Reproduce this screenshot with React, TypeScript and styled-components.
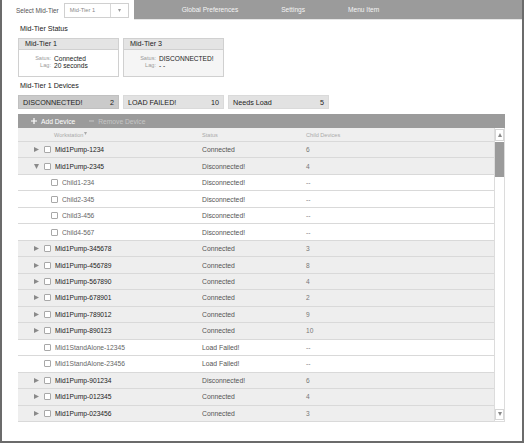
import React from "react";
import styled, { createGlobalStyle } from "styled-components";

type Kind = "parent" | "child" | "single";

interface Device {
  name: string;
  status: string;
  children: string;
  kind: Kind;
  open?: boolean;
}

const devices: Device[] = [
  { name: "Mid1Pump-1234", status: "Connected", children: "6", kind: "parent" },
  { name: "Mid1Pump-2345", status: "Disconnected!", children: "4", kind: "parent", open: true },
  { name: "Child1-234", status: "Disconnected!", children: "--", kind: "child" },
  { name: "Child2-345", status: "Disconnected!", children: "--", kind: "child" },
  { name: "Child3-456", status: "Disconnected!", children: "--", kind: "child" },
  { name: "Child4-567", status: "Disconnected!", children: "--", kind: "child" },
  { name: "Mid1Pump-345678", status: "Connected", children: "3", kind: "parent" },
  { name: "Mid1Pump-456789", status: "Connected", children: "8", kind: "parent" },
  { name: "Mid1Pump-567890", status: "Connected", children: "4", kind: "parent" },
  { name: "Mid1Pump-678901", status: "Connected", children: "2", kind: "parent" },
  { name: "Mid1Pump-789012", status: "Connected", children: "9", kind: "parent" },
  { name: "Mid1Pump-890123", status: "Connected", children: "10", kind: "parent" },
  { name: "Mid1StandAlone-12345", status: "Load Failed!", children: "--", kind: "single" },
  { name: "Mid1StandAlone-23456", status: "Load Failed!", children: "--", kind: "single" },
  { name: "Mid1Pump-901234", status: "Disconnected!", children: "6", kind: "parent" },
  { name: "Mid1Pump-012345", status: "Connected", children: "4", kind: "parent" },
  { name: "Mid1Pump-023456", status: "Connected", children: "3", kind: "parent" },
];

const GlobalStyle = createGlobalStyle`
  html, body {
    margin: 0;
    padding: 0;
    background: #fff;
  }
  body {
    font-family: "Liberation Sans", Arial, sans-serif;
    color: #222;
  }
`;

const Frame = styled.div`
  box-sizing: border-box;
  width: 524px;
  height: 443px;
  border: 2px solid #6b6b6b;
  border-top: 0;
  display: flex;
  flex-direction: column;
  overflow: hidden;
`;

const TopBar = styled.div`
  display: flex;
  height: 20px;
`;

const Picker = styled.div`
  display: flex;
  align-items: center;
  gap: 5px;
  padding: 0 5px 0 14px;
`;

const PickerLabel = styled.span`
  font-size: 6.4px;
  color: #555;
`;

const Select = styled.div`
  box-sizing: border-box;
  width: 65px;
  height: 15px;
  border: 1px solid #d0d0d0;
  display: flex;
  align-items: stretch;
`;

const SelectValue = styled.span`
  flex: 1;
  display: flex;
  align-items: center;
  padding-left: 5px;
  font-size: 5.7px;
  color: #888;
`;

const SelectArrow = styled.span`
  width: 17px;
  border-left: 1px solid #d8d8d8;
  display: flex;
  align-items: center;
  justify-content: center;
`;

const Nav = styled.nav`
  flex: 1;
  display: flex;
  align-items: center;
  gap: 43px;
  padding-left: 48px;
  background: #9b9b9b;
  border-bottom: 1px solid #e6e6e6;
  font-size: 6.6px;
  color: #f4f4f4;
`;

const Main = styled.main`
  display: flex;
  flex-direction: column;
  padding: 0 17px 0 16px;
`;

const Heading = styled.h2<{ $top: number }>`
  margin: ${({ $top }) => $top}px 0 0 2px;
  font-size: 7.1px;
  font-weight: normal;
  line-height: 10px;
  color: #222;
`;

const CardRow = styled.div`
  display: flex;
  gap: 4px;
  margin-top: 4px;
`;

const Card = styled.section<{ $muted?: boolean }>`
  box-sizing: border-box;
  width: 101px;
  height: 39px;
  border: 1px solid #d0d0d0;
  background: ${({ $muted }) => ($muted ? "#f5f5f5" : "#fff")};
`;

const CardHead = styled.div`
  height: 10px;
  line-height: 10px;
  padding-left: 6px;
  background: #e4e4e4;
  border-bottom: 1px solid #d0d0d0;
  font-size: 7.2px;
  color: #222;
`;

const CardBody = styled.dl`
  display: grid;
  grid-template-columns: 32px 1fr;
  column-gap: 3px;
  margin: 0;
  padding-top: 5px;
  line-height: 7px;
`;

const Term = styled.dt`
  text-align: right;
  font-size: 5.6px;
  color: #9a9a9a;
`;

const Value = styled.dd`
  margin: 0;
  font-size: 6.6px;
  color: #222;
`;

const ChipRow = styled.div`
  display: flex;
  gap: 4px;
  margin-top: 4px;
`;

const Chip = styled.div<{ $active?: boolean }>`
  box-sizing: border-box;
  width: 101px;
  height: 14px;
  padding: 0 4px;
  display: flex;
  align-items: center;
  justify-content: space-between;
  background: ${({ $active }) => ($active ? "#cacaca" : "#e2e2e2")};
  border: 1px solid ${({ $active }) => ($active ? "#c0c0c0" : "#dadada")};
  font-size: 7.2px;
  color: #222;
`;

const Toolbar = styled.div`
  display: flex;
  align-items: center;
  gap: 14px;
  height: 14px;
  margin-top: 5px;
  padding-left: 13px;
  background: #9b9b9b;
`;

const ToolButton = styled.span<{ $disabled?: boolean }>`
  display: flex;
  align-items: center;
  gap: 4px;
  font-size: 6.7px;
  color: ${({ $disabled }) => ($disabled ? "#c6c6c6" : "#fff")};
`;

const Table = styled.div`
  display: flex;
`;

const Grid = styled.div`
  flex: 1;
  display: flex;
  flex-direction: column;
`;

const HeadRow = styled.div`
  box-sizing: border-box;
  display: grid;
  grid-template-columns: 184px 104px 1fr;
  align-items: center;
  height: 14px;
  background: #efefef;
  border-bottom: 1px solid #d9d9d9;
  font-size: 5.6px;
  color: #aaa;
`;

const HeadCell = styled.span<{ $indent?: number }>`
  display: flex;
  align-items: flex-start;
  gap: 1px;
  padding-left: ${({ $indent }) => $indent ?? 0}px;
`;

const Row = styled.div<{ $kind: Kind }>`
  box-sizing: border-box;
  display: grid;
  grid-template-columns: 184px 104px 1fr;
  align-items: center;
  height: 16.47px;
  background: ${({ $kind }) => ($kind === "parent" ? "#eeeeee" : "#fff")};
  border-bottom: 1px solid #d9d9d9;
`;

const NameCell = styled.span<{ $kind: Kind }>`
  display: flex;
  align-items: center;
  padding-left: ${({ $kind }) => ($kind === "child" ? 33 : 16)}px;
  font-size: 6.7px;
  color: ${({ $kind }) => ($kind === "parent" ? "#222" : "#666")};
`;

const Toggle = styled.span`
  width: 10px;
  display: flex;
  align-items: center;
`;

const Check = styled.span`
  box-sizing: border-box;
  width: 7px;
  height: 7px;
  margin-right: 4px;
  border: 1px solid #a8a8a8;
  border-radius: 1px;
  background: #fff;
`;

const StatusCell = styled.span`
  font-size: 6.8px;
  color: #555;
`;

const CountCell = styled.span`
  font-size: 6.6px;
  color: #777;
`;

const Scroll = styled.div`
  box-sizing: border-box;
  width: 11px;
  display: flex;
  flex-direction: column;
  background: #fff;
  border-left: 1px solid #dcdcdc;
  border-right: 1px solid #dcdcdc;
  border-bottom: 1px solid #dcdcdc;
`;

const ScrollButton = styled.span<{ $h: number }>`
  box-sizing: border-box;
  height: ${({ $h }) => $h}px;
  display: flex;
  align-items: center;
  justify-content: center;
  border: 1px solid #d6d6d6;
  margin: 1px 0;
`;

const Thumb = styled.span`
  height: 35px;
  background: #9b9b9b;
`;

const Track = styled.span`
  flex: 1;
`;

const Tri = ({ dir, size = 5, color = "#8a8a8a" }: { dir: "right" | "down" | "up"; size?: number; color?: string }) => {
  const pts =
    dir === "right" ? "0,0 5,2.5 0,5" : dir === "down" ? "0,0 5,0 2.5,5" : "0,5 5,5 2.5,0";
  return (
    <svg width={size} height={size} viewBox="0 0 5 5">
      <polygon points={pts} fill={color} />
    </svg>
  );
};

const Plus = () => (
  <svg width="6" height="6" viewBox="0 0 6 6">
    <path d="M3 0v6M0 3h6" stroke="#fff" strokeWidth="1.2" />
  </svg>
);

const Minus = () => (
  <svg width="5" height="6" viewBox="0 0 5 6">
    <path d="M0 3h5" stroke="#c6c6c6" strokeWidth="1" />
  </svg>
);

export default function App() {
  return (
    <>
      <GlobalStyle />
      <Frame>
        <TopBar>
          <Picker>
            <PickerLabel>Select Mid-Tier</PickerLabel>
            <Select>
              <SelectValue>Mid-Tier 1</SelectValue>
              <SelectArrow>
                <Tri dir="down" size={3} color="#999" />
              </SelectArrow>
            </Select>
          </Picker>
          <Nav>
            <span>Global Preferences</span>
            <span>Settings</span>
            <span>Menu Item</span>
          </Nav>
        </TopBar>

        <Main>
          <Heading $top={4}>Mid-Tier Status</Heading>
          <CardRow>
            <Card>
              <CardHead>Mid-Tier 1</CardHead>
              <CardBody>
                <Term>Satus:</Term>
                <Value>Connected</Value>
                <Term>Lag:</Term>
                <Value>20 seconds</Value>
              </CardBody>
            </Card>
            <Card $muted>
              <CardHead>Mid-Tier 3</CardHead>
              <CardBody>
                <Term>Satus:</Term>
                <Value>DISCONNECTED!</Value>
                <Term>Lag:</Term>
                <Value>- -</Value>
              </CardBody>
            </Card>
          </CardRow>

          <Heading $top={4}>Mid-Tier 1 Devices</Heading>
          <ChipRow>
            <Chip $active>
              <span>DISCONNECTED!</span>
              <span>2</span>
            </Chip>
            <Chip>
              <span>LOAD FAILED!</span>
              <span>10</span>
            </Chip>
            <Chip>
              <span>Needs Load</span>
              <span>5</span>
            </Chip>
          </ChipRow>

          <Toolbar>
            <ToolButton>
              <Plus />
              Add Device
            </ToolButton>
            <ToolButton $disabled>
              <Minus />
              Remove Device
            </ToolButton>
          </Toolbar>

          <Table>
            <Grid>
              <HeadRow>
                <HeadCell $indent={36}>
                  Workstation
                  <Tri dir="down" size={3} color="#aaa" />
                </HeadCell>
                <HeadCell>Status</HeadCell>
                <HeadCell>Child Devices</HeadCell>
              </HeadRow>
              {devices.map((d) => (
                <Row key={d.name} $kind={d.kind}>
                  <NameCell $kind={d.kind}>
                    {d.kind !== "child" && (
                      <Toggle>{d.kind === "parent" && <Tri dir={d.open ? "down" : "right"} />}</Toggle>
                    )}
                    <Check />
                    {d.name}
                  </NameCell>
                  <StatusCell>{d.status}</StatusCell>
                  <CountCell>{d.children}</CountCell>
                </Row>
              ))}
            </Grid>
            <Scroll>
              <ScrollButton $h={12}>
                <Tri dir="up" size={4} color="#888" />
              </ScrollButton>
              <Thumb />
              <Track />
              <ScrollButton $h={11}>
                <Tri dir="down" size={4} color="#888" />
              </ScrollButton>
            </Scroll>
          </Table>
        </Main>
      </Frame>
    </>
  );
}
